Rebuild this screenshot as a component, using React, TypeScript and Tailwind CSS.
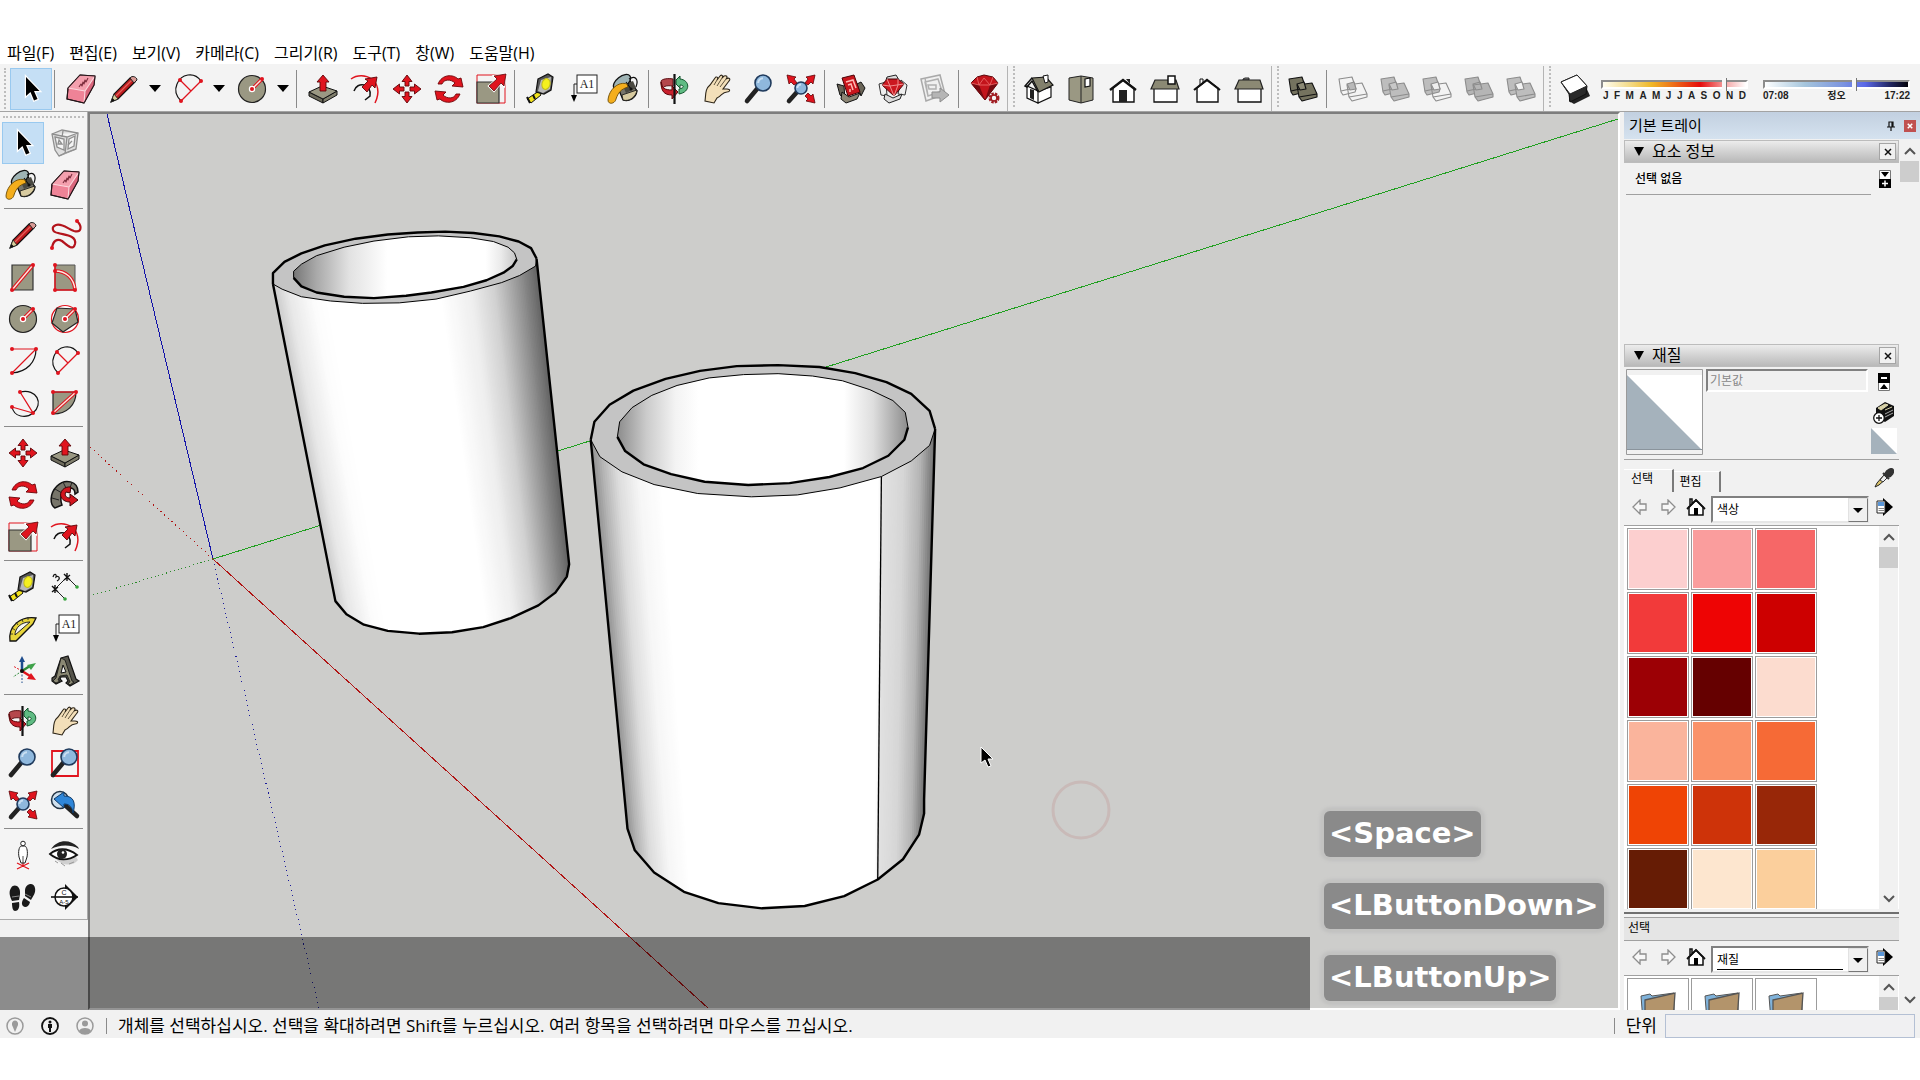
import { ReactNode } from "react";
import { clsx } from "clsx";

const OLIVE = "#9a9883";
const RED = "#e0141e";

type IconProps = { children: ReactNode; size?: string };

function Svg({ children, size = "h-[30px] w-[30px]" }: IconProps) {
  return (
    <svg viewBox="0 0 30 30" className={clsx("shrink-0 overflow-visible", size)} fill="none" aria-hidden="true">
      {children}
    </svg>
  );
}

function Dots({ at }: { at: number[][] }) {
  return (
    <>
      {at.map(([x, y]) => (
        <circle key={`${x}-${y}`} cx={x} cy={y} r="2" fill={RED} />
      ))}
    </>
  );
}

// Red guide line with a light core
function Guide({ d }: { d: string }) {
  return (
    <>
      <path d={d} stroke={RED} strokeWidth="3.6" />
      <path d={d} stroke="#fbe9e2" strokeWidth="1.4" />
    </>
  );
}

const CursorIcon = () => (
  <Svg>
    <path d="M10 3V22L14.500 18L18 26.500L21.500 25L18 17H23.500Z" fill="#000" stroke="#fff" strokeWidth="2.400" paintOrder="stroke" />
  </Svg>
);

const ComponentIcon = () => (
  <Svg>
    <g stroke="#8f8f8f" strokeWidth="1.300" fill="#dedede">
      <path d="M2 6L12 2L28 5L26 21L9 28L5 22Z" />
      <path d="M2 6L17 9L28 5M17 9L15 26M5 9L14 11V22L7 19ZM19 11L25 8L24 18L18 21Z" fill="#f4f4f4" />
      <path d="M9 12L12 16H8ZM18 17L22 13M9 28L15 25L26 21M13 3L12 9" />
    </g>
  </Svg>
);

const BucketIcon = () => (
  <Svg>
    <g transform="translate(-2 0)">
      <path d="M8 9L18 1L29 17C28 24 21 28 15 26Z" fill="#77756a" stroke="#111" strokeWidth="1.300" />
      <path d="M14 21L29 16C28 23 21 28 15 26Z" fill="#d8cba0" stroke="#111" strokeWidth=".8" />
      <path d="M15 12L25 7L28 14L18 19Z" fill="#4a4941" />
      <ellipse cx="14" cy="8" rx="10" ry="5.500" transform="rotate(-38 14 8)" fill="#9fb4b5" stroke="#111" strokeWidth="1.300" />
      <path d="M21 5C27 1 31 5 28 13M18 8L23 15" stroke="#111" strokeWidth="1.200" />
      <circle cx="23" cy="15" r="1.500" fill="#111" />
      <path d="M19 10C11 7 1 15 0 26C0 31 7 30 8 25C10 19 13 15 20 13Z" fill="#f4ae1c" stroke="#6b4b06" strokeWidth=".9" />
    </g>
  </Svg>
);

const EraserIcon = () => (
  <Svg>
    <g stroke="#241418" strokeWidth="1.100" strokeLinejoin="round">
      <path d="M14 1L29 2L28 11L18 29L1 25L2 14Z" fill="#ef8397" />
      <path d="M29 2L19 17L18 29L28 11Z" fill="#d9667c" stroke="none" />
      <path d="M14 1L29 2L19 17L2 14Z" fill="#f4a0ae" stroke="none" />
      <path d="M2 14L19 17L29 2M19 17L18 29" stroke="#fbd7dd" />
      <path d="M14 1L29 2L28 11L18 29L1 25L2 14Z" />
      <path d="M13 13L15 10L16 12L17 8L18 10L19 6L20 8L22 4" stroke="#7a2c3c" />
    </g>
  </Svg>
);

const PencilIcon = () => (
  <Svg>
    <path d="M2 28L5 20L21 4L26 8L9 25Z" fill="#bd1c1f" stroke="#111" strokeWidth="1.100" />
    <path d="M7 22L23 6" stroke="#e4605a" strokeWidth="1.200" />
    <path d="M9 24L25 8" stroke="#6c0b0d" strokeWidth="1" />
    <path d="M21 4C23 1 28 3 28 6L25 9Z" fill="#d99a95" stroke="#222" strokeWidth="1" />
    <path d="M2 28L5 20L9 25Z" fill="#d8cf9c" stroke="#222" strokeWidth=".8" />
    <path d="M2 28L3.500 24L6 26.500Z" fill="#111" />
  </Svg>
);

const FreehandIcon = () => (
  <Svg>
    <path d="M27 1C33 7 31 13 24 11C18 9 12 3 6 5C1 7 2 12 8 13C14 15 27 15 25 24C23 32 16 24 12 21C7 18 3 21 2 28" stroke="#b3141c" strokeWidth="2.200" />
    <Dots at={[[27, 1], [2, 28]]} />
  </Svg>
);

const RectIcon = () => (
  <Svg>
    <path d="M4 3H25V28H4Z" fill={OLIVE} stroke="#333" strokeWidth="1.200" />
    <Guide d="M4 28L25 3" />
    <Dots at={[[25, 3], [4, 28]]} />
  </Svg>
);

const RoundRectIcon = () => (
  <Svg>
    <path d="M5 3H25V28H5Z" fill={OLIVE} stroke="#555" strokeWidth="1" />
    <path d="M5 3V28H25" stroke={RED} strokeWidth="1.500" />
    <Guide d="M5 9C16 9 24 16 25 28" />
    <Dots at={[[5, 3], [5, 9], [5, 28], [25, 28]]} />
  </Svg>
);

const CircleIcon = () => (
  <Svg>
    <circle cx="15" cy="15" r="13.500" fill={OLIVE} stroke="#222" strokeWidth="1.200" />
    <Guide d="M15 15L25 5" />
    <circle cx="15" cy="15" r="3.200" fill="#fff" />
    <Dots at={[[15, 15], [25, 5]]} />
  </Svg>
);

const PolygonIcon = () => (
  <Svg>
    <circle cx="15" cy="15" r="13.500" stroke={RED} strokeWidth="1.200" fill="#fff" />
    <path d="M25 5L28 18L13 28L2 19L7 4Z" fill={OLIVE} stroke="#222" strokeWidth="1.200" />
    <Guide d="M15 15L25 5" />
    <circle cx="15" cy="15" r="3.200" fill="#fff" />
    <Dots at={[[15, 15], [25, 5]]} />
  </Svg>
);

const ArcIcon = () => (
  <Svg>
    <path d="M4 27C19 26 28 16 28 3" stroke="#111" strokeWidth="1.200" />
    <path d="M4 3H28L4 27" stroke={RED} strokeWidth="1.200" />
    <Dots at={[[4, 3], [28, 3], [4, 27]]} />
  </Svg>
);

const TwoPointArcIcon = () => (
  <Svg>
    <path d="M28 7C21 -3 8 0 4 10C1 17 4 23 8 27" stroke="#111" strokeWidth="1.200" />
    <path d="M28 7L8 27M7 6L18 17" stroke={RED} strokeWidth="1.300" />
    <Dots at={[[7, 6], [28, 7], [8, 27]]} />
  </Svg>
);

const ThreePointArcIcon = () => (
  <Svg>
    <path d="M12 4C29 0 36 16 25 25C18 31 6 29 4 19" stroke="#111" strokeWidth="1.200" />
    <path d="M12 4L25 25L4 19" stroke={RED} strokeWidth="1.300" />
    <Dots at={[[12, 4], [25, 25], [4, 19]]} />
  </Svg>
);

const PieIcon = () => (
  <Svg>
    <path d="M3 4H26C26 17 17 26 3 26Z" fill={OLIVE} stroke="#222" strokeWidth="1.200" />
    <path d="M3 4H26" stroke={RED} strokeWidth="1.300" />
    <Guide d="M3 25L26 4" />
    <Dots at={[[3, 4], [26, 4], [3, 25]]} />
  </Svg>
);

const MoveIcon = () => (
  <Svg>
    {[0, 90, 180, 270].map((a) => (
      <path key={a} d="M15 1L20 7.500H17V12H13V7.500H10Z" transform={`rotate(${a} 15 15)`} fill={RED} stroke="#5d0508" strokeWidth=".9" />
    ))}
  </Svg>
);

const PushPullIcon = () => (
  <Svg>
    <path d="M1 18L15 25V29L1 22Z" fill="#6d6b5c" stroke="#111" />
    <path d="M15 25L29 17V21L15 29Z" fill="#807e6c" stroke="#111" />
    <path d="M1 18L14 12L29 17L15 25Z" fill={OLIVE} stroke="#111" />
    <path d="M15 1L21 8H18V17H12V8H9Z" fill={RED} stroke="#5d0508" strokeWidth=".9" />
  </Svg>
);

const RotateIcon = () => (
  <Svg>
    {[0, 180].map((a) => (
      <path
        key={a}
        d="M4 10C8 0 19 0 24 5L27 4L29 13L18 12L21 9C17 5 10 5 8 10Z"
        transform={`rotate(${a} 15 15)`}
        fill={RED}
        stroke="#6d0508"
        strokeWidth=".9"
      />
    ))}
  </Svg>
);

const FollowMeIcon = () => (
  <Svg>
    <path d="M28 12C28 1 15 -2 7 6C-1 14 0 25 5 28L12 25C9 17 12 9 20 8C23 8 25 10 25 14Z" fill="#77756a" stroke="#111" strokeWidth="1.500" />
    <path d="M2 18L9 20M5 9L12 13M13 2L16 8M22 2L20 8" stroke="#222" strokeWidth="1" />
    <path d="M21 7C14 6 9 12 11 17C13 21 17 22 20 22V26L28 20L20 14V18C16 18 14 15 16 12L20 13Z" fill="#d3141d" stroke="#3d0306" strokeWidth="1" />
  </Svg>
);

const ScaleIcon = () => (
  <Svg>
    <path d="M1 1H29V29H1Z" stroke={RED} strokeWidth="1" />
    <path d="M1 8H23V29H1Z" fill={OLIVE} stroke="#333" strokeWidth="1.200" />
    <path d="M30 0L28 12L25 9L18 17L13 12L21 5L18 2Z" fill={RED} stroke="#fff" strokeWidth="2.200" paintOrder="stroke" />
    <path d="M30 0L28 12L25 9L18 17L13 12L21 5L18 2Z" stroke="#5d0508" strokeWidth=".8" />
  </Svg>
);

const OffsetIcon = () => (
  <Svg>
    <path d="M1 5C13 -4 36 6 25 29" stroke={RED} strokeWidth="1.500" />
    <path d="M4 17C7 7 22 9 20 22L15 26" stroke="#111" strokeWidth="1.500" />
    <path d="M27 3L25 14L22 11L17 18L12 13L18 7L15 5Z" fill={RED} stroke="#5d0508" strokeWidth=".9" />
  </Svg>
);

const TapeIcon = () => (
  <Svg>
    <path d="M1 25L13 17L15 21L5 29Z" fill="#f2e21c" stroke="#111" />
    <path d="M1 23L4 29M7 21L9 25" stroke="#111" strokeWidth="2" />
    <path d="M12 5L22 0L27 3L25 16L18 20L10 18Z" fill="#555" stroke="#111" strokeWidth="1.200" />
    <path d="M15 6L25 3L24 15L17 19L12 17Z" fill="#b9b9b9" />
    <ellipse cx="20" cy="10" rx="4" ry="5.500" transform="rotate(15 20 10)" fill="#f5f01e" stroke="#c4be18" />
  </Svg>
);

const DimensionIcon = () => (
  <Svg>
    <path d="M5 17L17 5M5 17L15 27M17 5L27 15" stroke="#222" strokeWidth="1" />
    <path d="M2 14L8 20M2 20L8 15M5 13V21M14 2L20 8M14 8L20 3M17 1V9" stroke="#111" strokeWidth="1.400" />
    <path d="M3 5C4 1 7 2 6 5C9 3 11 7 7 9" stroke="#111" strokeWidth="1.200" />
    <circle cx="15" cy="27" r="1.800" fill="#37a53e" />
    <circle cx="27" cy="15" r="1.800" fill="#37a53e" />
  </Svg>
);

const ProtractorIcon = () => (
  <Svg>
    <path d="M2 27C0 12 12 2 28 4L25 10L8 27Z" fill="#e6d43a" stroke="#111" strokeWidth="1.300" />
    <path d="M7 21C7 14 13 8 22 8Z" fill="#f6f6f0" stroke="#222" />
    <path d="M2 20H5M4 14L7 16M8 8L10 11M14 5L15 8M20 3V6" stroke="#222" strokeWidth=".8" />
  </Svg>
);

const TextIcon = () => (
  <Svg>
    <rect x="9" y="1" width="20" height="18" fill="#fff" stroke="#222" />
    <path d="M9 10H6V22" stroke="#222" />
    <path d="M3 21H9L6 28Z" fill="#000" />
    <text x="19" y="14" textAnchor="middle" fontSize="12" fill="#222" fontFamily="Liberation Serif, serif">A1</text>
  </Svg>
);

const AxesIcon = () => (
  <Svg>
    <path d="M14 15V5" stroke="#1d4c8d" strokeWidth="2.500" />
    <path d="M14 0L17 6H11Z" fill="#1d4c8d" />
    <path d="M14 15L22 10" stroke="#2e8b3a" strokeWidth="2.500" />
    <path d="M28 7L23 14L19 9Z" fill="#3fa24a" />
    <path d="M14 15L22 20" stroke={RED} strokeWidth="2.500" />
    <path d="M28 24L19 23L23 17Z" fill={RED} />
    <path d="M14 15V27" stroke="#1d4c8d" strokeDasharray="2 1.500" />
    <path d="M14 15L5 21" stroke="#2e8b3a" strokeDasharray="2 1.500" />
    <path d="M14 15L5 10" stroke={RED} strokeDasharray="2 1.500" />
    <circle cx="14" cy="15" r="2" fill="#111" />
  </Svg>
);

const ThreeDTextIcon = () => (
  <Svg>
    <path d="M11 2L18 0L26 23L29 25L20 30L16 27L18 25L16 21H11L10 23L12 25L6 28L2 25V22L5 20Z" fill="#55544b" stroke="#111" strokeWidth="1.200" />
    <path d="M11 2L15 4L22 25L24 26L20 29L18 27L20 26L17 19L10 20L8 24L10 25L6 27L3 25L6 22Z" fill="#8b8974" stroke="#111" strokeWidth=".8" />
    <path d="M13 9L11 17L16 16Z" fill="#f3f3f3" stroke="#111" />
  </Svg>
);

const OrbitIcon = () => (
  <Svg>
    <path d="M13 12C5 11 3 13 3 15L1 7C2 5 8 4 13 5Z" fill="#b5474c" stroke="#5d1014" />
    <path d="M16 6L20 2V5C30 6 31 18 19 20V15C25 14 24 11 20 11V14L16 10Z" fill="#5fbb83" stroke="#11532b" />
    <path d="M1 8C1 14 5 16 12 16V12L18 18L12 25V21C4 21 1 17 1 8Z" fill="#c8202c" stroke="#5d0508" />
    <path d="M14.500 0V30" stroke="#111" strokeWidth="2.200" />
  </Svg>
);

const HandIcon = () => (
  <Svg>
    <path
      d="M3 27C4 20 3 15 8 11L13 4C14 2 17 3 15 6L18 2C19 0 22 2 20 4L22 2C25 1 26 3 24 5C27 3 29 5 27 7L21 15L25 15C29 15 28 18 25 18C20 18 20 22 15 24L12 29Z"
      fill="#f3dfb9"
      stroke="#2d2518"
      strokeWidth="1.100"
    />
    <path d="M15 6L12 11M20 4L15 12M24 5L18 13" stroke="#4d422e" strokeWidth=".9" />
  </Svg>
);

function Lens({ cx = 18, cy = 10, r = 8 }: { cx?: number; cy?: number; r?: number }) {
  const k = r * 0.7;
  return (
    <>
      <path d={`M${cx - k} ${cy + k}L3 27`} stroke="#222" strokeWidth="4.600" strokeLinecap="round" />
      <circle cx={cx} cy={cy} r={r} fill="#8fb8dd" stroke="#1f3a5c" strokeWidth="1.600" />
      <path d={`M${cx - r * 0.6} ${cy}A${r * 0.6} ${r * 0.6} 0 0 1 ${cx} ${cy - r * 0.6}`} stroke="#c9dff2" strokeWidth="2" />
    </>
  );
}

const ZoomIcon = () => <Svg><Lens cx={19} cy={9} /></Svg>;

const ZoomWindowIcon = () => (
  <Svg>
    <path d="M2 3H28V28H2Z" stroke={RED} strokeWidth="1.800" />
    <Lens cx={19} cy={9} />
  </Svg>
);

const ZoomExtentsIcon = () => (
  <Svg>
    <Lens cx={15} cy={14} r={6} />
    <g fill={RED} stroke="#5d0508" strokeWidth=".8">
      <path d="M1 1L10 3L8 5L11 9L8 11L5 8L3 10Z" />
      <path d="M29 1L27 10L25 8L22 11L19 9L22 5L20 3Z" />
      <path d="M29 29L20 27L22 25L19 22L22 19L25 22L27 20Z" />
    </g>
  </Svg>
);

const PreviousIcon = () => (
  <Svg>
    <circle cx="10" cy="10" r="8.500" fill="#cfe0ee" stroke="#234" strokeWidth="1.500" />
    <path d="M16 16L27 26" stroke="#222" strokeWidth="4.500" strokeLinecap="round" />
    <path d="M4 9L14 2V6C24 6 26 13 23 23C22 17 20 14 14 14V18Z" fill="#2f86d8" stroke="#0f3a68" />
  </Svg>
);

const PersonIcon = () => (
  <Svg>
    <path d="M9 29L21 23M9 23L21 29M15 22V27" stroke={RED} strokeWidth="1.300" />
    <path d="M13 6C11 7 10 12 11 17L13 23H17L19 17C20 12 19 7 17 6Z" fill="#fff" stroke="#222" />
    <circle cx="15" cy="3.500" r="2.300" fill="#fff" stroke="#222" />
    <path d="M15 16V23" stroke="#222" strokeWidth=".8" />
  </Svg>
);

const EyeIcon = () => (
  <Svg>
    <path d="M3 15C8 25 22 28 28 20L23 12Z" fill="#cfcfcf" />
    <path d="M1 9C8 -1 20 -1 28 7L29 9C20 4 9 5 1 9Z" fill="#222" />
    <path d="M0 14C7 8 17 7 27 15C18 21 8 21 0 14Z" fill="#fff" stroke="#111" strokeWidth="1.800" />
    <circle cx="12" cy="14" r="5" fill="#222" />
    <circle cx="13" cy="12.500" r="1.300" fill="#fff" />
    <path d="M5 21L8 23M11 23L15 26M19 24L24 22" stroke="#999" />
  </Svg>
);

const FeetIcon = () => (
  <Svg>
    <g fill="#1a1a1a">
      <path d="M3 6C6 1 13 4 12 12L11 18L4 19C1 13 1 9 3 6Z" />
      <path d="M4 21L11 20C12 26 10 29 7 29C5 29 4 26 4 21Z" />
      <path d="M17 8C18 1 26 0 27 6C28 11 25 14 23 18L17 14Z" />
      <path d="M16 16L22 20C21 25 17 26 15 24C13 22 14 19 16 16Z" />
    </g>
    <path d="M4 15L11 14M17 12L23 15" stroke="#888" />
  </Svg>
);

const SectionIcon = () => (
  <Svg>
    <path d="M15 2L28 15L15 28Z" fill="#111" />
    <circle cx="14" cy="15" r="9" fill="#fff" stroke="#111" strokeWidth="1.500" />
    <path d="M1 15H28" stroke="#111" strokeWidth="1.600" />
    <text x="14" y="13" textAnchor="middle" fontSize="7" fill="#111" fontFamily="Liberation Sans, sans-serif">C</text>
    <text x="14" y="22" textAnchor="middle" fontSize="6" fill="#111" fontFamily="Liberation Sans, sans-serif">A-5</text>
  </Svg>
);

const WarehouseIcon = () => (
  <Svg>
    <path d="M1 10L8 12L9 25L4 21ZM25 8L29 14L25 22L21 10Z" fill="#6a6558" stroke="#111" />
    <path d="M6 18L13 23L24 19L21 25L10 29L5 25Z" fill="#8b8574" stroke="#111" />
    <path d="M6 4L18 1L24 18L12 22Z" fill="#c9161d" stroke="#4b0508" />
    <path d="M10 8L17 6L20 14M12 11L15 10L17 16M14 15L14 18" stroke="#ffb9b4" strokeWidth="1.500" />
  </Svg>
);

const ExtensionIcon = () => (
  <Svg>
    <path d="M1 10L8 8L9 22L3 21ZM23 6L29 11L27 21L20 20Z" fill="#eee" stroke="#333" />
    <path d="M9 3L18 1L21 6H8ZM7 20L15 24L24 20L22 25L11 29L6 25Z" fill="#ddd" stroke="#222" />
    <path d="M4 11L9 5H20L26 10L16 22Z" fill="#cb1820" stroke="#4b0508" />
    <path d="M4 11L12 12L26 10M9 5L12 12L16 22L20 11V5" stroke="#f49a98" strokeWidth=".9" />
  </Svg>
);

const LayoutIcon = () => (
  <Svg>
    <path d="M1 5L20 1L25 20L6 27Z" fill="#f0f0f0" stroke="#a9a9a9" strokeWidth="1.500" />
    <path d="M5 8L18 5L22 17L8 22ZM8 11H16V15H9ZM5 4L8 22" stroke="#b0b0b0" strokeWidth="1.500" />
    <path d="M12 18H20V14L29 21L20 28V24H12Z" fill="#b5b5b5" stroke="#8d8d8d" />
  </Svg>
);

const RubyIcon = () => (
  <Svg>
    <path d="M1 9L7 3L14 1L23 3L28 9L15 26Z" fill="#c3141b" stroke="#5a0508" />
    <path d="M1 9L9 11L15 26ZM28 9L20 11L15 26" fill="#760a10" />
    <path d="M1 9L9 11L20 11L28 9M7 3L9 11L14 4L20 11L23 3" stroke="#ef6f6f" strokeWidth=".8" />
    <circle cx="24" cy="24" r="4" fill="#f3f3f3" stroke="#a01c22" strokeWidth="3" strokeDasharray="2.200 1" />
    <circle cx="24" cy="24" r="3" stroke="#a01c22" strokeWidth="1.500" />
  </Svg>
);

const HouseIsoIcon = () => (
  <Svg>
    <path d="M3 12V24L14 29V17ZM14 17V29L27 23V13Z" fill="#fff" stroke="#111" strokeWidth="1.200" />
    <path d="M6 15L10 16V26L6 24Z" fill="#222" />
    <path d="M8 4L22 3L29 11L15 18Z" fill="#82806c" stroke="#111" strokeWidth="1.200" />
    <path d="M8 4L1 12L3 13L8 7L14 18" stroke="#111" strokeWidth="1.500" />
    <path d="M19 2L24 1V8L21 9Z" fill="#fff" stroke="#111" />
  </Svg>
);

const TopViewIcon = () => (
  <Svg>
    <path d="M3 4L15 2L27 4V26L15 29L3 26Z" fill={OLIVE} stroke="#222" />
    <path d="M15 2V29" stroke="#222" />
    <path d="M19 5L24 4V12L19 13Z" fill="#fff" stroke="#111" strokeWidth="1.200" />
  </Svg>
);

const FrontViewIcon = () => (
  <Svg>
    <path d="M5 14V28H26V14L15 6Z" fill="#fff" stroke="#111" strokeWidth="1.400" />
    <path d="M2 16L15 6L28 16" stroke="#111" strokeWidth="2.400" />
    <path d="M11 16H19V28H11ZM18 5H22V10Z" fill="#222" />
  </Svg>
);

function SideView({ chimney }: { chimney: "tall" | "low" }) {
  return (
    <Svg>
      {chimney === "low" && <path d="M9 5L11 4H15V6H9Z" fill="#888" stroke="#222" />}
      <path d="M4 13H27V28H4Z" fill="#fff" stroke="#111" strokeWidth="1.300" />
      <path d="M5 6H26L29 15H1Z" fill="#8b8974" stroke="#222" strokeWidth="1.200" />
      {chimney === "tall" && <path d="M18 2H25V10H18Z" fill="#fff" stroke="#111" strokeWidth="1.500" />}
    </Svg>
  );
}
const RightViewIcon = () => <SideView chimney="tall" />;
const LeftViewIcon = () => <SideView chimney="low" />;

const BackViewIcon = () => (
  <Svg>
    <path d="M8 11V5H11V9" fill="#fff" stroke="#111" />
    <path d="M5 14V28H26V14L15 6Z" fill="#fff" stroke="#111" strokeWidth="1.400" />
    <path d="M2 16L15 6L28 16" stroke="#111" strokeWidth="2.200" />
  </Svg>
);

type SolidProps = { a: string; b: string; mid: string; line?: string };

function Solid({ a, b, mid, line = "#8c8c8c" }: SolidProps) {
  return (
    <Svg>
      <g stroke={line} strokeWidth="1.100" strokeLinejoin="round">
        <path d="M1 5L14 3L18 15L17 18L5 21L3 18Z" fill={a} />
        <path d="M9 11L24 9L29 20V23L14 27L11 23Z" fill={b} />
        <path d="M3 17L12 15M11 23L29 20" />
        <path d="M9 10L16 8L18 15L12 16Z" fill={mid} />
      </g>
    </Svg>
  );
}
const OuterShellIcon = () => <Solid a="#75735f" b="#75735f" mid="#8b8974" line="#111" />;
const IntersectIcon = () => <Solid a="none" b="none" mid="#b9b9b9" />;
const UnionIcon = () => <Solid a="#bdbdbd" b="#bdbdbd" mid="#c8c8c8" />;
const SubtractIcon = () => <Solid a="#bdbdbd" b="none" mid="#eee" />;
const TrimIcon = () => <Solid a="#b5b5b5" b="#b5b5b5" mid="none" />;
const SplitIcon = () => <Solid a="#bdbdbd" b="#bdbdbd" mid="#f3f3f3" />;

const ShadowIcon = () => (
  <Svg>
    <path d="M9 21L26 13L30 22L14 30L9 27Z" fill="#222" />
    <path d="M1 8L17 1L27 12L26 20L10 28L9 20Z" fill="#2a2a2a" stroke="#111" />
    <path d="M1 8L17 1L27 12L10 20Z" fill="#fff" stroke="#222" />
  </Svg>
);

type Tool = { name: string; icon: () => ReactNode; active?: boolean; drop?: boolean };

const topGroups: Tool[][][] = [
  [
    [{ name: "선택 도구", icon: CursorIcon, active: true }],
    [
      { name: "지우개", icon: EraserIcon },
      { name: "선", icon: PencilIcon, drop: true },
      { name: "호", icon: TwoPointArcIcon, drop: true },
      { name: "원", icon: CircleIcon, drop: true },
    ],
    [
      { name: "밀기/끌기", icon: PushPullIcon },
      { name: "오프셋", icon: OffsetIcon },
      { name: "이동", icon: MoveIcon },
      { name: "회전", icon: RotateIcon },
      { name: "배율", icon: ScaleIcon },
    ],
    [
      { name: "줄자", icon: TapeIcon },
      { name: "텍스트", icon: TextIcon },
      { name: "페인트통", icon: BucketIcon },
    ],
    [
      { name: "궤도", icon: OrbitIcon },
      { name: "이동 보기", icon: HandIcon },
      { name: "확대/축소", icon: ZoomIcon },
      { name: "범위 확대", icon: ZoomExtentsIcon },
    ],
    [
      { name: "3D Warehouse", icon: WarehouseIcon },
      { name: "Extension Warehouse", icon: ExtensionIcon },
      { name: "LayOut", icon: LayoutIcon },
    ],
    [{ name: "확장 관리자", icon: RubyIcon }],
  ],
  [
    [
      { name: "등각", icon: HouseIsoIcon },
      { name: "상단", icon: TopViewIcon },
      { name: "정면", icon: FrontViewIcon },
      { name: "오른쪽", icon: RightViewIcon },
      { name: "뒤", icon: BackViewIcon },
      { name: "왼쪽", icon: LeftViewIcon },
    ],
  ],
  [
    [{ name: "외부 셸", icon: OuterShellIcon }],
    [
      { name: "교차", icon: IntersectIcon },
      { name: "결합", icon: UnionIcon },
      { name: "빼기", icon: SubtractIcon },
      { name: "자르기", icon: TrimIcon },
      { name: "분할", icon: SplitIcon },
    ],
  ],
];

const sideGroups: Tool[][] = [
  [
    { name: "선택", icon: CursorIcon, active: true },
    { name: "구성 요소 만들기", icon: ComponentIcon },
    { name: "페인트통", icon: BucketIcon },
    { name: "지우개", icon: EraserIcon },
  ],
  [
    { name: "선", icon: PencilIcon },
    { name: "자유형", icon: FreehandIcon },
    { name: "직사각형", icon: RectIcon },
    { name: "회전 직사각형", icon: RoundRectIcon },
    { name: "원", icon: CircleIcon },
    { name: "다각형", icon: PolygonIcon },
    { name: "호", icon: ArcIcon },
    { name: "2점 호", icon: TwoPointArcIcon },
    { name: "3점 호", icon: ThreePointArcIcon },
    { name: "파이", icon: PieIcon },
  ],
  [
    { name: "이동", icon: MoveIcon },
    { name: "밀기/끌기", icon: PushPullIcon },
    { name: "회전", icon: RotateIcon },
    { name: "따라가기", icon: FollowMeIcon },
    { name: "배율", icon: ScaleIcon },
    { name: "오프셋", icon: OffsetIcon },
  ],
  [
    { name: "줄자", icon: TapeIcon },
    { name: "치수", icon: DimensionIcon },
    { name: "각도기", icon: ProtractorIcon },
    { name: "텍스트", icon: TextIcon },
    { name: "축", icon: AxesIcon },
    { name: "3D 텍스트", icon: ThreeDTextIcon },
  ],
  [
    { name: "궤도", icon: OrbitIcon },
    { name: "이동 보기", icon: HandIcon },
    { name: "확대/축소", icon: ZoomIcon },
    { name: "창 확대", icon: ZoomWindowIcon },
    { name: "범위 확대", icon: ZoomExtentsIcon },
    { name: "이전", icon: PreviousIcon },
  ],
  [
    { name: "카메라 배치", icon: PersonIcon },
    { name: "둘러보기", icon: EyeIcon },
    { name: "걷기", icon: FeetIcon },
    { name: "단면", icon: SectionIcon },
  ],
];

const menus = ["파일(F)", "편집(E)", "보기(V)", "카메라(C)", "그리기(R)", "도구(T)", "창(W)", "도움말(H)"];
const months = ["J", "F", "M", "A", "M", "J", "J", "A", "S", "O", "N", "D"];

const swatches = [
  "#fccfcf", "#fa9d9d", "#f66767",
  "#f23a3a", "#ee0404", "#cd0000",
  "#9c0005", "#650000", "#fcdccf",
  "#fab49c", "#fa9269", "#f66a36",
  "#ef4405", "#ce3309", "#982708",
  "#661c05", "#fde6cf", "#fbcf9c",
];

function ToolButton({ tool }: { tool: Tool }) {
  const Icon = tool.icon;
  return (
    <button
      type="button"
      aria-label={tool.name}
      className={clsx(
        "flex h-[42px] w-[42px] shrink-0 items-center justify-center border",
        tool.active ? "border-[#99c9ef] bg-[#c5dff5]" : "border-transparent",
      )}
    >
      <Icon />
    </button>
  );
}

function Grip() {
  return <div className="h-[41px] border-l-2 border-dotted border-[#bdbdbd]" />;
}

function TopToolbar() {
  return (
    <div className="flex h-12 shrink-0 items-center border-b border-[#a3a3a3] bg-[#f3f3f3] pt-0.5">
      {topGroups.map((group, g) => (
        <div key={g} className="flex items-center">
          <div className={clsx("flex", g === 0 ? "w-2.5 pl-1" : "w-3 gap-[5px] pl-px")}>
            {g > 0 && <div className="h-[45px] w-px bg-[#b4b4b4]" />}
            <Grip />
          </div>
          {group.map((tools, i) => (
            <div key={i} className="flex items-center">
              {i > 0 && <div className="ml-0.5 mr-[5px] h-[38px] w-px bg-[#8a8a8a]" />}
              {tools.map((tool) => (
                <div key={tool.name} className={clsx("flex items-center", tool.drop && "pl-px")}>
                  <ToolButton tool={tool} />
                  {tool.drop && (
                    <button type="button" aria-label={`${tool.name} 더 보기`} className="flex h-[42px] w-[21px] items-center pl-1">
                      <span className="border-x-[6px] border-t-[7px] border-x-transparent border-t-black" />
                    </button>
                  )}
                </div>
              ))}
            </div>
          ))}
        </div>
      ))}
      <div className="flex w-3 gap-[5px] pl-px">
        <div className="h-[45px] w-px bg-[#b4b4b4]" />
        <Grip />
      </div>
      <ToolButton tool={{ name: "그림자 표시", icon: ShadowIcon }} />
      <div className="ml-[5px] flex flex-1 gap-[15px] pr-2.5 pt-1 font-['Liberation_Sans','Noto_Sans_CJK_KR',sans-serif] text-[10px] font-bold leading-3 text-[#222]">
        <div className="flex-1">
          <ShadowSlider label="날짜" value={86} warm />
          <div className="flex justify-between px-0.5 pt-px">
            {months.map((m, i) => (
              <span key={i}>{m}</span>
            ))}
          </div>
        </div>
        <div className="flex-1">
          <ShadowSlider label="시간" value={63} />
          <div className="flex justify-between pt-px">
            <span>07:08</span>
            <span>정오</span>
            <span>17:22</span>
          </div>
        </div>
      </div>
    </div>
  );
}

function ShadowSlider({ label, value, warm }: { label: string; value: number; warm?: boolean }) {
  return (
    <input
      type="range"
      aria-label={label}
      defaultValue={value}
      className={clsx(
        "block h-[9px] w-full appearance-none border-2 border-[#8c8c8c] border-b-white border-r-white",
        "[&::-webkit-slider-thumb]:h-[13px] [&::-webkit-slider-thumb]:w-[5px] [&::-webkit-slider-thumb]:appearance-none [&::-webkit-slider-thumb]:border-r [&::-webkit-slider-thumb]:border-[#777] [&::-webkit-slider-thumb]:bg-[#f7f7f7]",
        warm
          ? "bg-[linear-gradient(90deg,#fffdf0_0%,#f4dc8c_18%,#efb727_34%,#ee7a1a_47%,#e60d0d_68%,#f4a0a0_85%,#fff_100%)]"
          : "bg-[linear-gradient(90deg,#fdfeff_0%,#a5c5dc_28%,#7b93e0_55%,#5a68e8_70%,#20245e_88%,#04040c_100%)]",
      )}
    />
  );
}

function SideToolbar() {
  return (
    <div className="flex w-[88px] shrink-0 flex-col bg-[#f1f1f1]">
      <div className="border-b border-r border-[#ababab] bg-[#f4f4f4] pb-px pt-1">
        <div className="mx-[3px] mb-1 border-t-2 border-dotted border-[#bdbdbd]" />
        {sideGroups.map((group, i) => (
          <div key={i}>
            {i > 0 && <div className="mx-1 mb-[5px] mt-0.5 h-px bg-[#8a8a8a]" />}
            <div className="grid grid-cols-[42px_42px] pl-0.5">
              {group.map((tool) => (
                <ToolButton key={tool.name} tool={tool} />
              ))}
            </div>
          </div>
        ))}
      </div>
    </div>
  );
}

type Stop = [number, number];
type Pt = [number, number];

function shade(stops: Stop[], t: number) {
  const i = Math.max(1, stops.findIndex(([s]) => s >= t));
  const [t0, v0] = stops[i - 1];
  const [t1, v1] = stops[i];
  const v = Math.round(v0 + ((v1 - v0) * (t - t0)) / (t1 - t0));
  return `rgb(${v},${v},${v})`;
}

// Vertical strips between two converging sides, lit along the stops
function Shading({ top, bottom, y, stops }: { top: Pt; bottom: Pt; y: Pt; stops: Stop[] }) {
  const n = 160;
  const at = ([a, b]: Pt, t: number) => a + (b - a) * t;
  return (
    <>
      {Array.from({ length: n }, (_, i) => {
        const t0 = i / n;
        const t1 = Math.min(1, (i + 1.6) / n);
        return (
          <path
            key={i}
            d={`M${at(top, t0)} ${y[0]}L${at(top, t1)} ${y[0]}L${at(bottom, t1)} ${y[1]}L${at(bottom, t0)} ${y[1]}Z`}
            fill={shade(stops, (i + 0.5) / n)}
          />
        );
      })}
    </>
  );
}

const tubeA = {
  back: "50,178 50,155 75,131 112,113 163,96 230,82 300,73 365,69 425,67 487,70 543,77 585,88 612,102 624,124",
  front: "624,124 622,140 587,160 548,175 480,193 405,210 325,218 245,219 175,214 112,205 70,189 50,178",
  holeBack: "95,165 95,151 112,136 145,118 205,100 270,87 345,78 410,76 480,80 530,88 562,100 576,112 581,126",
  holeFront: "581,126 572,140 552,154 515,170 465,184 395,196 340,203 270,208 205,205 145,196 112,183 95,165",
  base: "624,124 695,772 690,798 665,832 628,859 568,886 508,905 440,916 368,919 300,913 248,900 210,878 186,850 50,178",
};

const tubeB = {
  back: "742,508 750,470 783,434 835,404 905,379 980,362 1060,352 1150,350 1240,354 1318,367 1386,386 1440,411 1480,447 1492,485",
  front: "1492,485 1480,520 1440,553 1375,586 1285,610 1192,625 1092,629 975,622 880,603 810,576 762,544 742,508",
  holeBack: "800,502 805,470 832,440 875,414 930,393 1000,377 1075,370 1150,368 1225,373 1290,383 1350,402 1400,425 1427,450 1433,482",
  holeFront: "1433,482 1425,508 1390,542 1335,568 1262,587 1175,600 1085,604 990,597 917,581 857,560 817,532 800,502",
  base: "1492,485 1468,1270 1468,1300 1457,1345 1422,1397 1367,1440 1294,1475 1208,1496 1115,1501 1020,1490 945,1466 880,1425 838,1378 822,1332 742,508",
};

function Tube({ id, shape, children }: { id: string; shape: typeof tubeA; children: ReactNode }) {
  const thin = { stroke: "#000", strokeWidth: 1, vectorEffect: "non-scaling-stroke" as const };
  const thick = { ...thin, strokeWidth: 2.4, strokeLinejoin: "round" as const };
  return (
    <g fill="none">
      <clipPath id={`${id}-body`}>
        <polygon points={`${shape.back} ${shape.base}`} />
      </clipPath>
      <g clipPath={`url(#${id}-body)`}>{children}</g>
      <polygon points={`${shape.back} ${shape.front}`} fill="#c4c4c4" />
      <polygon points={`${shape.holeBack} ${shape.holeFront}`} fill={`url(#${id}-hole)`} />
      <polyline points={shape.front} {...thin} />
      <polyline points={shape.holeBack} {...thin} />
      <polyline points={shape.holeFront} {...thick} />
      <polyline points={shape.back} {...thick} />
      <polyline points={shape.base} {...thick} />
    </g>
  );
}

function Scene() {
  return (
    <svg viewBox="90 114 1528 894" preserveAspectRatio="xMinYMin slice" className="block h-full w-full" aria-label="모델">
      <defs>
        <linearGradient id="a-hole">
          <stop offset="0" stopColor="#777" />
          <stop offset=".1" stopColor="#a8a8a8" />
          <stop offset=".25" stopColor="#e2e2e2" />
          <stop offset=".42" stopColor="#fff" />
          <stop offset=".86" stopColor="#fff" />
          <stop offset=".93" stopColor="#eaeaea" />
          <stop offset="1" stopColor="#c4c4c4" />
        </linearGradient>
        <linearGradient id="b-hole">
          <stop offset="0" stopColor="#8c8c8c" />
          <stop offset=".1" stopColor="#cbcbcb" />
          <stop offset=".2" stopColor="#f3f3f3" />
          <stop offset=".28" stopColor="#fff" />
          <stop offset=".78" stopColor="#fff" />
          <stop offset=".88" stopColor="#dedede" />
          <stop offset="1" stopColor="#8c8c8c" />
        </linearGradient>
      </defs>
      <g strokeWidth="1" fill="none" shapeRendering="crispEdges">
        <path d="M107 114L213 559" stroke="#1212a8" />
        <path d="M213 559L319 1008" stroke="#1a1a9a" strokeDasharray="1 4" />
        <path d="M213 559L1618 119" stroke="#20a020" />
        <path d="M213 559L90 596" stroke="#2a8a2a" strokeDasharray="1 3" />
        <path d="M213 559L708 1008" stroke="#b01414" />
        <path d="M213 559L90 447" stroke="#b01414" strokeDasharray="1 4" />
      </g>
      <g transform="translate(250 200) scale(.4592 .4719)">
        <Tube id="a" shape={tubeA}>
          <Shading
            top={[28, 617]}
            bottom={[200, 711]}
            y={[60, 920]}
            stops={[[0, 205], [0.05, 232], [0.14, 252], [0.2, 255], [0.62, 255], [0.74, 238], [0.83, 208], [0.91, 158], [1, 98]]}
          />
        </Tube>
        <Tube id="b" shape={tubeB}>
          <Shading
            top={[727, 1496]}
            bottom={[838, 1461]}
            y={[350, 1501]}
            stops={[[0, 145], [0.03, 182], [0.07, 220], [0.13, 246], [0.2, 255], [0.84, 255], [0.845, 226], [0.91, 214], [0.96, 180], [1, 112]]}
          />
          <path d="M1375 586L1367 1440" stroke="#000" strokeWidth="1.300" vectorEffect="non-scaling-stroke" />
        </Tube>
      </g>
      <circle cx="1081" cy="810" r="28" fill="none" stroke="#c9bab8" strokeWidth="3" />
      <path d="M981 747V763L985 760L988 767L991 766L988 759H993Z" fill="#000" stroke="#fff" strokeWidth="1" />
    </svg>
  );
}

function KeyBadge({ label }: { label: string }) {
  return (
    <div className="w-fit rounded-md bg-[#8a8a8a] px-[5px] pb-0.5 text-[29px] font-bold leading-[44px] text-white shadow-[0_0_3px_4px_#c2c2c1]">
      {label}
    </div>
  );
}

function Chevron({ down }: { down?: boolean }) {
  return (
    <svg viewBox="0 0 12 8" className="h-2 w-3 shrink-0" fill="none" aria-hidden="true">
      <path d={down ? "M1 1L6 6L11 1" : "M1 7L6 2L11 7"} stroke="#555" strokeWidth="2" />
    </svg>
  );
}

function ScrollBar({ end = true }: { end?: boolean }) {
  return (
    <div className="flex w-[19px] shrink-0 flex-col items-center bg-[#f1f1f1]">
      <button type="button" aria-label="위로" className="flex h-[21px] w-full shrink-0 items-center justify-center">
        <Chevron />
      </button>
      <div className="h-[21px] w-full bg-[#cdcdcd]" />
      <div className="flex-1" />
      {end && (
        <button type="button" aria-label="아래로" className="flex h-[21px] w-full shrink-0 items-center justify-center">
          <Chevron down />
        </button>
      )}
    </div>
  );
}

function SectionHeader({ title }: { title: string }) {
  return (
    <div className="flex h-[23px] shrink-0 items-center border border-[#bcbcbc] bg-linear-to-b from-[#ececec] to-[#b9b9b9] pl-[9px] pr-0.5">
      <span className="border-x-[5px] border-t-[9px] border-x-transparent border-t-black" />
      <h2 className="ml-2 flex-1 pb-0.5 text-[16px] leading-5">{title}</h2>
      <button type="button" aria-label={`${title} 닫기`} className="flex h-[17px] w-[17px] items-center justify-center border border-[#a5a5a5] bg-[#f0f0f0]">
        <svg viewBox="0 0 8 8" className="h-2 w-2" aria-hidden="true">
          <path d="M1 1L7 7M7 1L1 7" stroke="#111" strokeWidth="1.500" />
        </svg>
      </button>
    </div>
  );
}

function NavArrow({ flip }: { flip?: boolean }) {
  return (
    <svg viewBox="0 0 16 16" className={clsx("h-4 w-4", flip && "rotate-180")} fill="#f7f7f7" aria-hidden="true">
      <path d="M1 8L8 1V5H14V11H8V15Z" stroke="#8d8d8d" strokeWidth="1.300" />
    </svg>
  );
}

function NavRow({ label, value, focused }: { label: string; value: string; focused?: boolean }) {
  return (
    <div className="flex h-[33px] shrink-0 items-center pl-2 pr-[5px]">
      <button type="button" aria-label="뒤로" className="mb-1"><NavArrow /></button>
      <button type="button" aria-label="앞으로" className="mb-1 ml-3"><NavArrow flip /></button>
      <button type="button" aria-label="모델에서" className="mb-1 ml-2.5">
        <svg viewBox="0 0 20 20" className="h-5 w-5" fill="none" aria-hidden="true">
          <path d="M4 8V2H6V6M3 10V18H17V10L10 3Z" fill="#fff" stroke="#111" strokeWidth="1.500" />
          <path d="M1 12L10 3L19 12" stroke="#111" strokeWidth="1.800" />
          <path d="M8 11H12V18H8Z" fill="#000" />
        </svg>
      </button>
      <div className="relative ml-[5px] mt-0.5 flex-1">
        <select
          aria-label={label}
          className="block h-[27px] w-full appearance-none border-2 border-[#808080] border-b-[#e6e6e6] border-r-[#e6e6e6] bg-white pl-1 text-[12px] leading-[22px]"
        >
          <option>{value}</option>
        </select>
        {focused && <div className="absolute bottom-[3px] left-1.5 right-[26px] h-px bg-black" />}
        <div className="pointer-events-none absolute bottom-px right-px top-0.5 flex w-5 items-center justify-center border border-[#e2e2e2] border-b-[#777] border-r-[#777] bg-[#f0f0f0]">
          <span className="border-x-[5px] border-t-[5px] border-x-transparent border-t-black" />
        </div>
      </div>
      <button type="button" aria-label="세부 정보" className="mb-1 ml-[7px]">
        <svg viewBox="0 0 18 18" className="h-[18px] w-[18px]" aria-hidden="true">
          <path d="M7 0L17 9L7 18Z" fill="#000" />
          <path d="M1 3H9V15H1Z" fill="#fff" stroke="#222" />
          <path d="M2 4H8V8H2Z" fill="#5a96d8" />
          <path d="M2.500 10.500H8M2.500 12.500H8" stroke="#888" />
        </svg>
      </button>
    </div>
  );
}

function Folder() {
  return (
    <svg viewBox="0 0 36 30" className="h-[30px] w-9" aria-hidden="true">
      <path d="M1 5L10 3L12 5L34 2V30H3Z" fill="#7fb2da" stroke="#555" />
      <path d="M5 9L35 2L33 30H5Z" fill="#b3946b" stroke="#555" strokeWidth="1.300" />
    </svg>
  );
}

function Tray() {
  return (
    <aside className="flex w-[296px] shrink-0 flex-col bg-[#f1f1f1]">
      <div className="flex h-[27px] shrink-0 items-center bg-linear-to-b from-[#c2d0e0] to-[#d5e2ef] pl-[5px] pr-1">
        <h1 className="flex-1 pb-0.5 text-[15px] leading-5">기본 트레이</h1>
        <button type="button" aria-label="고정">
          <svg viewBox="0 0 8 10" className="h-2.5 w-2" fill="none" aria-hidden="true">
            <path d="M2 6V1H6V6M5 1V6M0 6H8M4 6V10" stroke="#111" strokeWidth="1.200" />
          </svg>
        </button>
        <button type="button" aria-label="닫기" className="ml-[9px] flex h-3 w-3 items-center justify-center bg-[#c0504f]">
          <svg viewBox="0 0 8 8" className="h-1.5 w-1.5" aria-hidden="true">
            <path d="M1 1L7 7M7 1L1 7" stroke="#fff" strokeWidth="2" />
          </svg>
        </button>
      </div>
      <div className="flex min-h-0 flex-1 pt-px">
        <div className="flex min-w-0 flex-1 flex-col">
          <SectionHeader title="요소 정보" />
          <div className="h-[181px] shrink-0 pl-0.5">
            <div className="flex h-[31px] items-center justify-between pl-[9px] pr-2 text-[12px] font-medium">
              <p>선택 없음</p>
              <button type="button" aria-label="세부 정보 표시">
                <svg viewBox="0 0 12 18" className="h-[18px] w-3" aria-hidden="true">
                  <path d="M.5 .5H11.500V17.500H.5Z" fill="#fff" stroke="#777" />
                  <path d="M2 2H10L6 7ZM0 9H12V18H0Z" fill="#000" />
                  <path d="M3 13.500H9M6 10.500V16.500" stroke="#fff" strokeWidth="1.500" />
                </svg>
              </button>
            </div>
            <div className="mr-7 h-px bg-[#a0a0a0]" />
          </div>
          <SectionHeader title="재질" />
          <div className="flex h-[93px] shrink-0 items-start gap-[3px] border-b border-[#a0a0a0] pl-0.5 pr-0.5 pt-0.5">
            <svg viewBox="0 0 77 86" className="h-[86px] w-[77px]" aria-label="현재 재질">
              <path d="M.5 .5H76.500V85.500H.5Z" fill="#f1f1f1" stroke="#9a9a9a" />
              <path d="M1 6H76V80H1Z" fill="#fff" />
              <path d="M1 6L75 80H1Z" fill="#a5b2bc" />
              <path d="M1 80.500H76" stroke="#8a949c" />
            </svg>
            <input
              aria-label="재질 이름"
              disabled
              defaultValue="기본값"
              className="h-[23px] min-w-0 flex-1 border-2 border-[#808080] border-b-white border-r-white bg-[#f0f0f0] pb-0.5 pl-0.5 text-[12px] text-[#888]"
            />
            <div className="flex w-[26px] flex-col items-center pt-1">
              <svg viewBox="0 0 12 18" className="h-[18px] w-3" aria-hidden="true">
                <path d="M.5 .5H11.500V17.500H.5Z" fill="#fff" stroke="#777" />
                <path d="M0 0H12V10H0ZM2 16H10L6 11Z" fill="#000" />
                <path d="M3 5H9" stroke="#fff" strokeWidth="2" />
              </svg>
              <svg viewBox="0 0 22 22" className="mt-[11px] h-[22px] w-[22px]" aria-hidden="true">
                <path d="M3 6L12 0L21 4V14L12 20L3 15Z" fill="#111" />
                <path d="M5 6L12 2L15 3L8 8ZM12 8L19 5" fill="#d8d2a8" stroke="#d8d2a8" />
                <path d="M12 12L20 8M12 15L20 11" stroke="#aaa" />
                <circle cx="6" cy="16" r="5.300" fill="#fff" stroke="#111" strokeWidth="1.300" />
                <path d="M3 16H9M6 13V19" stroke="#111" strokeWidth="1.300" />
              </svg>
              <svg viewBox="0 0 26 26" className="mt-1 h-[26px] w-[26px]" aria-hidden="true">
                <path d="M0 0H26V26H0Z" fill="#fff" />
                <path d="M0 0L26 26H0Z" fill="#a5b2bc" />
              </svg>
            </div>
          </div>
          <div className="flex h-8 shrink-0 items-end pr-[5px] text-[12px] leading-4" role="tablist">
            <button type="button" role="tab" aria-selected="true" className="h-[23px] w-[50px] border-r-2 border-t border-r-[#7a7a7a] border-t-white pb-1 pr-3">
              선택
            </button>
            <button type="button" role="tab" aria-selected="false" className="h-[21px] w-[47px] border-r-2 border-t border-r-[#7a7a7a] border-t-white pr-3">
              편집
            </button>
            <div className="flex-1" />
            <svg viewBox="0 0 20 20" className="mb-1 h-5 w-5" aria-label="스포이트">
              <path d="M1 19L3 15L10 7L13 10L5 17Z" fill="#d9c268" stroke="#222" />
              <path d="M6 12L10 7L13 10L9 14Z" fill="#eee" stroke="#333" />
              <path d="M9 5L15 11M11 6C13 1 18 0 19 2C20 4 18 8 14 9Z" fill="#333" stroke="#333" strokeWidth="2" />
            </svg>
          </div>
          <NavRow label="라이브러리" value="색상" />
          <div className="flex min-h-0 flex-1 border-t border-[#a0a0a0] bg-white pr-px">
            <div className="grid flex-1 auto-rows-[62px] grid-cols-[62px_62px_62px] gap-0.5 overflow-hidden pl-[3px] pt-0.5">
              {swatches.map((color) => (
                <button
                  key={color}
                  type="button"
                  aria-label={color}
                  className="border border-[#9c9c9c] bg-clip-content p-px"
                  style={{ backgroundColor: color }}
                />
              ))}
            </div>
            <ScrollBar />
          </div>
          <div className="h-[9px] shrink-0 border-b border-[#a0a0a0] pt-[3px]">
            <div className="h-0.5 bg-[#707070]" />
          </div>
          <div className="h-[23px] shrink-0 border-b border-[#a0a0a0] bg-[#e5e5e5] pl-1 text-[12px] leading-[20px]">선택</div>
          <div className="h-px shrink-0" />
          <NavRow label="보조 라이브러리" value="재질" focused />
          <div className="flex h-[35px] shrink-0 overflow-hidden border-t border-[#a0a0a0] bg-white pr-px">
            <div className="grid flex-1 grid-cols-[62px_62px_62px] gap-0.5 pl-[3px] pt-0.5">
              {[1, 2, 3].map((n) => (
                <button key={n} type="button" aria-label={`폴더 ${n}`} className="flex h-[62px] items-start justify-center border border-[#9c9c9c] pt-3">
                  <Folder />
                </button>
              ))}
            </div>
            <ScrollBar end={false} />
          </div>
        </div>
        <div className="flex w-[21px] shrink-0 pl-px">
          <ScrollBar />
        </div>
      </div>
    </aside>
  );
}

function StatusBar() {
  return (
    <div className="flex h-7 shrink-0 items-center bg-[#f1f1f1] pr-[5px] pt-1 leading-6">
      <button type="button" aria-label="위치" className="ml-1.5">
        <svg viewBox="0 0 18 18" className="h-[18px] w-[18px]" fill="none" aria-hidden="true">
          <circle cx="9" cy="9" r="8" stroke="#9a9a9a" strokeWidth="1.500" />
          <path d="M9 15L6 8C5 2 13 2 12 8Z" fill="#9a9a9a" />
        </svg>
      </button>
      <button type="button" aria-label="정보" className="ml-[17px]">
        <svg viewBox="0 0 18 18" className="h-[18px] w-[18px]" fill="none" aria-hidden="true">
          <circle cx="9" cy="9" r="8" stroke="#111" strokeWidth="1.800" />
          <circle cx="9" cy="5" r="1.500" fill="#111" />
          <path d="M7 7H11V11H10V15H8V11H7Z" fill="#111" />
        </svg>
      </button>
      <button type="button" aria-label="계정" className="ml-[17px]">
        <svg viewBox="0 0 18 18" className="h-[18px] w-[18px]" fill="none" aria-hidden="true">
          <circle cx="9" cy="9" r="8" stroke="#9a9a9a" strokeWidth="1.500" />
          <circle cx="9" cy="6.500" r="3" fill="#9a9a9a" />
          <path d="M3 14C4 10 14 10 15 14C12 18 6 18 3 14Z" fill="#9a9a9a" />
        </svg>
      </button>
      <div className="ml-3 h-4 w-px bg-[#8a8a8a]" />
      <p className="ml-[11px] flex-1 text-[17px]">
        개체를 선택하십시오. 선택을 확대하려면 Shift를 누르십시오. 여러 항목을 선택하려면 마우스를 끄십시오.
      </p>
      <div className="h-4 w-px bg-[#8a8a8a]" />
      <label htmlFor="measure" className="ml-[11px] mr-2 text-[17px]">단위</label>
      <input id="measure" className="h-6 w-[250px] border border-[#b4c0d4] bg-[#f0f0f2]" />
    </div>
  );
}

export default function App() {
  return (
    <div className="flex h-screen flex-col bg-white pb-[42px] pt-[42px] font-['Open_Sans','Noto_Sans_CJK_KR',sans-serif] text-black">
      <nav className="flex h-[22px] shrink-0 items-center gap-[15px] pl-[7px] text-[16px] leading-5">
        {menus.map((menu) => (
          <button key={menu} type="button">
            {menu}
          </button>
        ))}
      </nav>
      <TopToolbar />
      <div className="relative flex min-h-0 flex-1">
        <SideToolbar />
        <main className="relative min-w-0 flex-1 overflow-hidden border-2 border-b-white border-l-[#7d7d7d] border-r-white border-t-[#7d7d7d] bg-[#cdcdcb]">
          <Scene />
          <div className="absolute bottom-[7px] left-[1234px] flex flex-col gap-[26px] font-['DejaVu_Sans','Liberation_Sans',sans-serif]">
            <KeyBadge label="<Space>" />
            <KeyBadge label="<LButtonDown>" />
            <KeyBadge label="<LButtonUp>" />
          </div>
        </main>
        <div className="w-1 shrink-0 bg-[#f1f1f1]" />
        <Tray />
        <div className="absolute bottom-0 left-0 h-[73px] w-[1310px] bg-black/42" />
      </div>
      <StatusBar />
    </div>
  );
}
